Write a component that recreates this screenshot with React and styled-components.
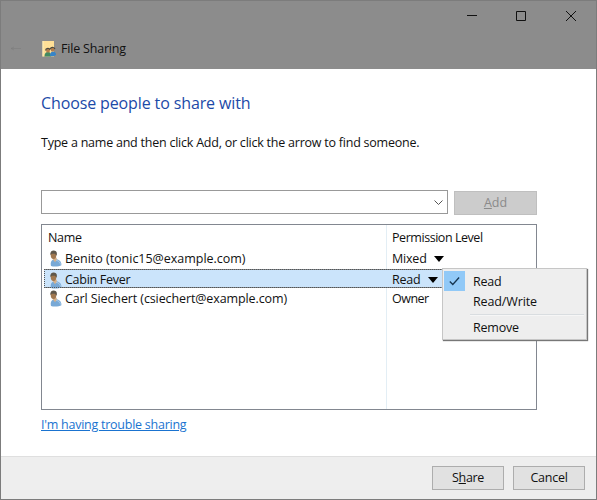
import React from "react";
import styled, { createGlobalStyle } from "styled-components";

const GlobalStyle = createGlobalStyle`
  * { box-sizing: border-box; }
  body { margin: 0; overflow: hidden; background: #fff; }
`;

const Window = styled.main`
  width: 597px;
  height: 500px;
  display: flex;
  flex-direction: column;
  border: 1px solid #7c7c7c;
  background: #fff;
  color: #111;
  font: 12.5px/20px "Open Sans", "Noto Sans", sans-serif;
  white-space: nowrap;
  cursor: default;
`;

const Header = styled.header`
  height: 68px;
  flex: none;
  background: #8c8c8c;
`;

const CaptionBar = styled.div`
  height: 32px;
  display: flex;
  justify-content: flex-end;
  padding: 9px 19px 0 0;
  gap: 37px;
`;

const CaptionIcon = styled.svg`
  width: 12px;
  height: 12px;
  fill: none;
  stroke: #111;
`;

const TitleRow = styled.div`
  display: flex;
  align-items: center;
  height: 30px;
  padding: 1px 0 0 9px;
`;

const BackIcon = styled.svg`
  width: 12px;
  height: 9px;
  margin-right: 20px;
  fill: none;
  stroke: #7b7b7b;
`;

const FolderIcon = styled.svg`
  width: 14px;
  height: 18px;
  margin-right: 5px;
`;

const Text = styled.span`
  letter-spacing: ${(p) => p.$track || 0}px;
`;

const Content = styled.section`
  flex: 1;
  display: flex;
  flex-direction: column;
  align-items: flex-start;
  padding: 21px 0 0 40px;
`;

const Heading = styled.h1`
  margin: 0;
  height: 26px;
  font-size: 16px;
  line-height: 26px;
  font-weight: 400;
  letter-spacing: -0.12px;
  color: #1c4aa8;
`;

const Hint = styled.p`
  margin: 17px 0 37px;
  line-height: 20px;
  letter-spacing: -0.23px;
`;

const AddRow = styled.div`
  display: flex;
  align-items: flex-start;
  gap: 6px;
`;

const ComboBox = styled.div`
  width: 407px;
  height: 24px;
  display: flex;
  align-items: center;
  justify-content: flex-end;
  padding: 2px 4px 0 0;
  border: 1px solid #999;
`;

const Chevron = styled.svg`
  width: 9px;
  height: 6px;
  fill: none;
  stroke: #555;
`;

const Button = styled.button`
  width: ${(p) => p.$width}px;
  height: ${(p) => p.$height}px;
  padding: 0;
  border: 1px solid ${(p) => (p.disabled ? "#bfbfbf" : "#adadad")};
  background: ${(p) => (p.disabled ? "#ccc" : "#e1e1e1")};
  color: ${(p) => (p.disabled ? "#8a8a8a" : "#111")};
  font: inherit;
  line-height: 20px;
  letter-spacing: ${(p) => p.$track || 0}px;
`;

const AddButton = styled(Button)`
  margin-top: 1px;
`;

const ListBox = styled.div`
  position: relative;
  width: 496px;
  height: 186px;
  margin-top: 9px;
  padding: 3px 1px 2px;
  border: 1px solid #828790;
  background: linear-gradient(#e3eef5, #e3eef5) 344px 0 / 1px 100% no-repeat;
`;

const ListRow = styled.div`
  height: ${(p) => p.$height}px;
  display: grid;
  grid-template-columns: 349px 1fr;
  align-items: center;
`;

const NameColumn = styled.div`
  padding-left: 5px;
`;

const Selection = styled(ListRow)`
  width: 399px;
  margin-left: 1px;
  grid-template-columns: 348px 1fr;
  background: #cbe4fb;
  outline: 1px dotted #555;
  outline-offset: -1px;
  border-top: 1px solid #7d858c;
  border-bottom: 1px solid #7d858c;
`;

const Person = styled.div`
  display: flex;
  align-items: center;
  padding-left: ${(p) => p.$inset}px;
`;

const PersonIcon = styled.svg`
  width: 14px;
  height: 17px;
  margin-right: 3px;
`;

const Level = styled.div`
  display: flex;
  align-items: center;
  gap: 7px;
`;

const DropArrow = styled.span`
  border: solid transparent;
  border-width: 6px 5px 0;
  border-top-color: #000;
`;

const Menu = styled.div`
  position: absolute;
  left: 400px;
  top: 43px;
  width: 145px;
  height: 72px;
  padding: 2px 1px;
  border: 1px solid #c6c6c6;
  background: #eee;
  box-shadow: 1px 1px 1px #777;
`;

const MenuItem = styled.div`
  display: flex;
  align-items: center;
  height: 20px;
  line-height: 20px;
`;

const MenuLabel = styled(Text)`
  padding-top: ${(p) => (p.$last ? 0 : 2)}px;
`;

const CheckCell = styled.span`
  display: flex;
  align-items: center;
  justify-content: center;
  width: 21px;
  height: 20px;
  margin-right: 8px;
  background: ${(p) => (p.$checked ? "#91c9f7" : "transparent")};
`;

const CheckIcon = styled.svg`
  width: 11px;
  height: 9px;
  fill: none;
  stroke: #173550;
  stroke-width: 1.3;
`;

const Separator = styled.div`
  height: 2px;
  margin: 3px 1px 2px 26px;
  background: linear-gradient(#d9dde0 50%, #f6f6f6 50%);
`;

const HelpLink = styled.a`
  margin-top: 5px;
  color: #1a73d0;
  letter-spacing: -0.25px;
  text-decoration: underline;
  text-underline-offset: 1px;
`;

const Footer = styled.footer`
  height: 43px;
  flex: none;
  display: flex;
  justify-content: flex-end;
  gap: 9px;
  padding: 9px 11px 0 0;
  border-top: 1px solid #dfdfdf;
  background: #eee;
`;

function UserGlyph() {
  return (
    <PersonIcon viewBox="0 0 14 17" aria-hidden="true">
      <path d="M3 16C2.2 12.8 3 10.3 6 9.6l3.2-.4c3 .8 4.4 3.4 4.2 6-2 1.5-7.8 1.8-10.4.8Z" fill="#78a9d6" />
      <path d="M8 10.3c3 .4 4.2 2.2 4.5 4.2" fill="none" stroke="#a9cbea" />
      <path d="m4.5 9 2.6 3.2L9 9 8 7H5Z" fill="#d5b18b" />
      <ellipse cx="5.5" cy="5" rx="2.8" ry="4" fill="#a07850" />
      <path d="M2.3 5C2 1.7 3.8.4 5.9.5c2.6.1 3.6 2.4 2.7 5.2L7 3.7 4 3.8Z" fill="#5f574a" />
    </PersonIcon>
  );
}

function SharedFolder() {
  return (
    <FolderIcon viewBox="0 0 14 18" aria-hidden="true">
      <path d="M.5 1h11.5v15.5H.5z" fill="#ffe097" />
      <path d="M.5 1h1v15.5h-1z" fill="#fff0bd" />
      <path d="M2.5 16.5c0-3 1-4.5 3.5-4.5s3 1.8 3 4.5Z" fill="#438b62" />
      <path d="M8 16c0-3 1-4.5 3-4.5s3 1.5 3 3.5c-2 1.4-4 1.6-6 1Z" fill="#3684c8" />
      <circle cx="6" cy="10.7" r="1.9" fill="#b57d4b" />
      <circle cx="10.6" cy="9.7" r="1.9" fill="#b57d4b" />
      <path d="M3.6 10.5c.2-2.8 4-2.8 4.4-.6M8.4 9c.5-2.3 4-2.1 4.5.2" fill="none" stroke="#4c4a40" strokeWidth="1.3" />
    </FolderIcon>
  );
}

export default function App() {
  return (
    <>
      <GlobalStyle />
      <Window>
        <Header>
          <CaptionBar>
            <CaptionIcon viewBox="0 0 12 12"><path d="M0 5.5h10" /></CaptionIcon>
            <CaptionIcon viewBox="0 0 12 12"><path d="M.5 1.5h9v9h-9z" /></CaptionIcon>
            <CaptionIcon viewBox="0 0 12 12"><path d="m1 1 10 10M11 1 1 11" /></CaptionIcon>
          </CaptionBar>
          <TitleRow>
            <BackIcon viewBox="0 0 12 9"><path d="M1 4.5h10M4 3 1 4.5 4 6" strokeOpacity=".55" /></BackIcon>
            <SharedFolder />
            <Text $track={-0.2}>File Sharing</Text>
          </TitleRow>
        </Header>
        <Content>
          <Heading>Choose people to share with</Heading>
          <Hint>Type a name and then click Add, or click the arrow to find someone.</Hint>
          <AddRow>
            <ComboBox><Chevron viewBox="0 0 9 6"><path d="m.5.5 4 4 4-4" /></Chevron></ComboBox>
            <AddButton $width={83} $height={24} disabled><u>A</u>dd</AddButton>
          </AddRow>
          <ListBox>
            <ListRow $height={20}>
              <NameColumn><Text $track={-0.3}>Name</Text></NameColumn>
              <Text $track={-0.45}>Permission Level</Text>
            </ListRow>
            <ListRow $height={21}>
              <Person $inset={5}><UserGlyph /><Text $track={-0.02}>Benito (tonic15@example.com)</Text></Person>
              <Level><Text $track={-0.2}>Mixed</Text><DropArrow /></Level>
            </ListRow>
            <Selection $height={19}>
              <Person $inset={4}><UserGlyph /><Text $track={-0.28}>Cabin Fever</Text></Person>
              <Level><Text $track={-0.2}>Read</Text><DropArrow /></Level>
            </Selection>
            <ListRow $height={21}>
              <Person $inset={5}><UserGlyph /><Text $track={-0.11}>Carl Siechert (csiechert@example.com)</Text></Person>
              <Text $track={-0.5}>Owner</Text>
            </ListRow>
            <Menu>
              <MenuItem>
                <CheckCell $checked><CheckIcon viewBox="0 0 11 9"><path d="m.8 4.5 3 3 6.3-7" /></CheckIcon></CheckCell>
                <MenuLabel $track={-0.2}>Read</MenuLabel>
              </MenuItem>
              <MenuItem><CheckCell /><MenuLabel $track={-0.12}>Read/Write</MenuLabel></MenuItem>
              <Separator />
              <MenuItem><CheckCell /><MenuLabel $last $track={-0.2}>Remove</MenuLabel></MenuItem>
            </Menu>
          </ListBox>
          <HelpLink>I'm having trouble sharing</HelpLink>
        </Content>
        <Footer>
          <Button $width={72} $height={24} $track={-0.35}>S<u>h</u>are</Button>
          <Button $width={72} $height={24} $track={-0.25}>Cancel</Button>
        </Footer>
      </Window>
    </>
  );
}
